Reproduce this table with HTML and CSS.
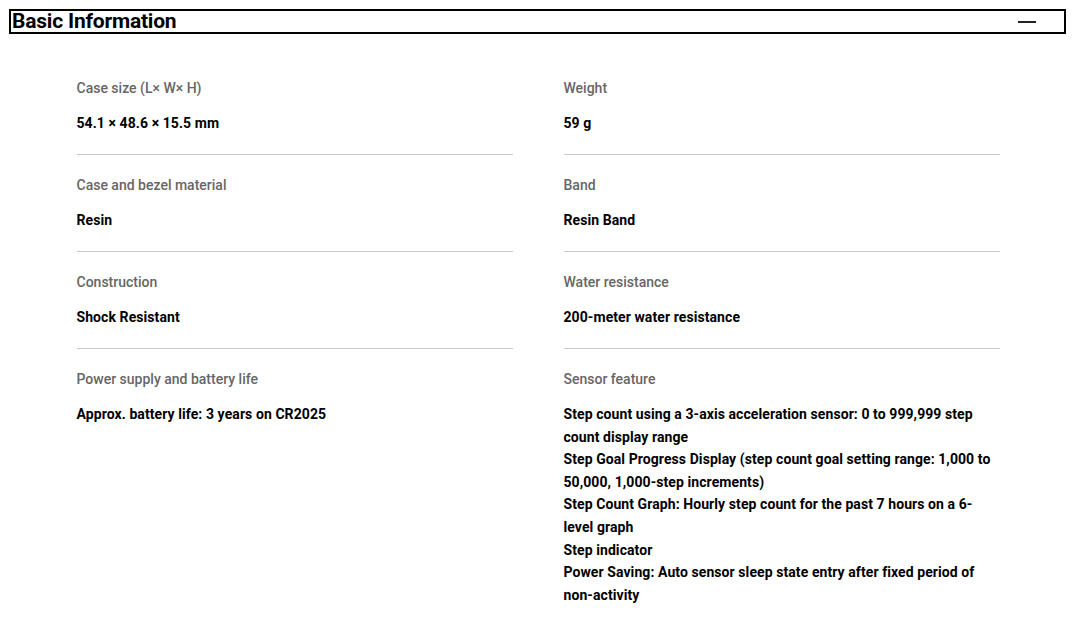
FILE: index.html
```html
<!DOCTYPE html>
<html lang="en">
<head>
<meta charset="utf-8">
<title>Basic Information</title>
<link rel="stylesheet" href="styles.css">
</head>
<body>
<section class="spec">
  <header class="spec-head">
    <h2 class="spec-title">Basic Information</h2>
    <span class="spec-toggle" aria-hidden="true"></span>
  </header>
  <div class="spec-grid">
    <div class="spec-item">
      <div class="spec-label">Case size (L× W× H)</div>
      <div class="spec-value">54.1 × 48.6 × 15.5 mm</div>
    </div>
    <div class="spec-item">
      <div class="spec-label">Weight</div>
      <div class="spec-value">59 g</div>
    </div>
    <div class="spec-item">
      <div class="spec-label">Case and bezel material</div>
      <div class="spec-value">Resin</div>
    </div>
    <div class="spec-item">
      <div class="spec-label">Band</div>
      <div class="spec-value">Resin Band</div>
    </div>
    <div class="spec-item">
      <div class="spec-label">Construction</div>
      <div class="spec-value">Shock Resistant</div>
    </div>
    <div class="spec-item">
      <div class="spec-label">Water resistance</div>
      <div class="spec-value">200-meter water resistance</div>
    </div>
    <div class="spec-item last">
      <div class="spec-label">Power supply and battery life</div>
      <div class="spec-value">Approx. battery life: 3 years on CR2025</div>
    </div>
    <div class="spec-item last">
      <div class="spec-label">Sensor feature</div>
      <div class="spec-value">Step count using a 3-axis acceleration sensor: 0 to 999,999 step count display range<br>Step Goal Progress Display (step count goal setting range: 1,000 to 50,000, 1,000-step increments)<br>Step Count Graph: Hourly step count for the past 7 hours on a 6-level graph<br>Step indicator<br>Power Saving: Auto sensor sleep state entry after fixed period of non-activity</div>
    </div>
  </div>
</section>
</body>
</html>
```
FILE: styles.css
```css
html, body {
  margin: 0;
  padding: 0;
  background: #fff;
}
body {
  font-family: Roboto, "Liberation Sans", sans-serif;
  color: #000;
}
.spec {
  padding: 9px 8px 0 9px;
}
.spec-head {
  display: flex;
  align-items: center;
  justify-content: space-between;
  border: 2px solid #000;
  height: 21px;
  padding: 0 0 0 1px;
}
.spec-title {
  margin: 0;
  font-size: 21px;
  font-weight: 700;
  line-height: 21px;
  letter-spacing: -0.2px;
}
.spec-toggle {
  width: 18px;
  height: 2px;
  background: #222;
  margin-right: 28px;
}
.spec-grid {
  display: grid;
  grid-template-columns: 436px 436px;
  column-gap: 51px;
  width: 923px;
  margin: 43px auto 0;
  padding-left: 1px;
}
.spec-item {
  border-bottom: 1px solid #c8c8c8;
  padding: 0 0 19px;
  margin-bottom: 19.4px;
  font-size: 14px;
}
.spec-item.last {
  border-bottom: 0;
}
.spec-label {
  color: #666;
  font-weight: 500;
  line-height: 22px;
  margin-bottom: 13px;
}
.spec-value {
  font-weight: 700;
  line-height: 22.6px;
  letter-spacing: 0.08px;
}
```
